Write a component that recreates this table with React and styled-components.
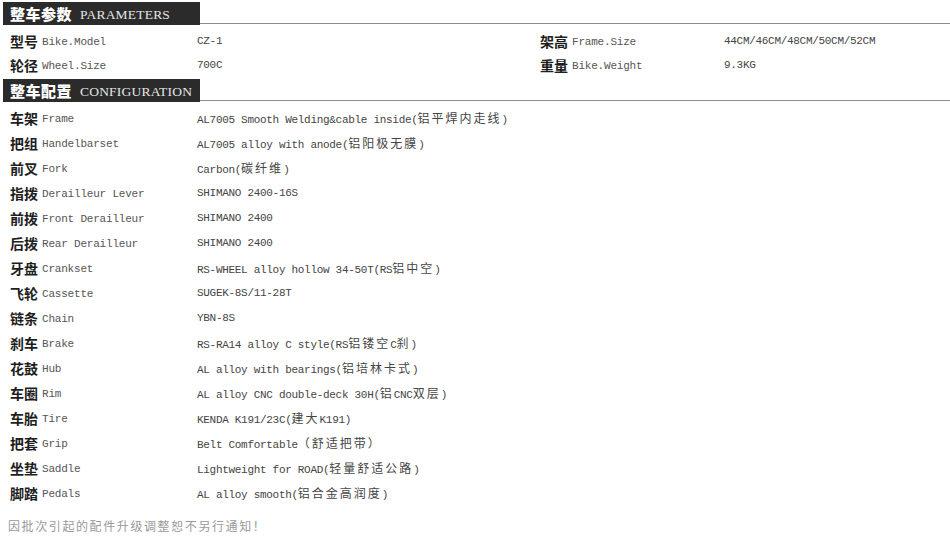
import React from "react";
import styled, { createGlobalStyle } from "styled-components";

const GlobalStyle = createGlobalStyle`
  body {
    margin: 0;
    background: #fff;
    font-family: "Liberation Mono", "Noto Sans CJK SC", monospace;
  }
`;

const Page = styled.div`
  width: 950px;
  padding-top: 2px;
`;

const SectionHead = styled.div`
  display: flex;
  align-items: flex-end;
  padding-left: 3px;
`;

const Tab = styled.div`
  width: 197px;
  height: 23px;
  background: #2b2b2b;
  display: flex;
  align-items: center;
  padding-left: 7px;
  box-sizing: border-box;
  gap: 8px;
`;

const TabCn = styled.span`
  font-family: "Noto Sans CJK SC", sans-serif;
  font-weight: 900;
  font-size: 15px;
  color: #fff;
  letter-spacing: 0.5px;
`;

const TabEn = styled.span`
  font-family: "Liberation Serif", serif;
  font-size: 13.5px;
  color: #e6e6e6;
  letter-spacing: 0.2px;
  margin-top: 2px;
`;

const Rule = styled.div`
  flex: 1;
  height: 1px;
  background: #8c8c8c;
  margin-bottom: 1px;
`;

const ParamGrid = styled.div`
  display: grid;
  grid-template-columns: 187px 343px 184px 1fr;
  grid-auto-rows: 24px;
  align-items: center;
  padding: 4px 0 2px 10px;
`;

const ConfigGrid = styled.div`
  display: grid;
  grid-template-columns: 187px 1fr;
  grid-auto-rows: 25px;
  align-items: center;
  padding: 3px 0 12px 10px;
`;

const Label = styled.div`
  display: flex;
  align-items: center;
  white-space: nowrap;
`;

const LabelCn = styled.span`
  font-family: "Noto Sans CJK SC", sans-serif;
  font-weight: 700;
  font-size: 14px;
  color: #1e1e1e;
`;

const LabelEn = styled.span`
  font-family: "Liberation Mono", monospace;
  font-size: 11px;
  color: #555;
  margin-left: 4px;
  margin-top: 2px;
  letter-spacing: -0.2px;
`;

const Value = styled.div`
  font-family: "Liberation Mono", monospace;
  font-size: 11px;
  color: #444;
  white-space: nowrap;
  letter-spacing: -0.3px;
`;

const Cjk = styled.span`
  font-family: "Noto Sans CJK SC", sans-serif;
  font-size: 12px;
  letter-spacing: 2px;
  color: #444;
`;

const Footer = styled.div`
  padding-left: 8px;
  font-family: "Noto Sans CJK SC", sans-serif;
  font-size: 12px;
  letter-spacing: 1.6px;
  color: #999;
`;

const splitRuns = (text) =>
  text.split(/([\u3000-\u9fff\uff00-\uffef]+)/).map((part, i) =>
    /[\u3000-\u9fff\uff00-\uffef]/.test(part) ? <Cjk key={i}>{part}</Cjk> : part
  );

const params = [
  ["型号", "Bike.Model", "CZ-1", "架高", "Frame.Size", "44CM/46CM/48CM/50CM/52CM"],
  ["轮径", "Wheel.Size", "700C", "重量", "Bike.Weight", "9.3KG"],
];

const config = [
  ["车架", "Frame", "AL7005 Smooth Welding&cable inside(铝平焊内走线)"],
  ["把组", "Handelbarset", "AL7005 alloy with anode(铝阳极无膜)"],
  ["前叉", "Fork", "Carbon(碳纤维)"],
  ["指拨", "Derailleur Lever", "SHIMANO 2400-16S"],
  ["前拨", "Front Derailleur", "SHIMANO 2400"],
  ["后拨", "Rear Derailleur", "SHIMANO 2400"],
  ["牙盘", "Crankset", "RS-WHEEL alloy hollow 34-50T(RS铝中空)"],
  ["飞轮", "Cassette", "SUGEK-8S/11-28T"],
  ["链条", "Chain", "YBN-8S"],
  ["刹车", "Brake", "RS-RA14 alloy C style(RS铝镂空C刹)"],
  ["花鼓", "Hub", "AL alloy with bearings(铝培林卡式)"],
  ["车圈", "Rim", "AL alloy CNC double-deck 30H(铝CNC双层)"],
  ["车胎", "Tire", "KENDA K191/23C(建大K191)"],
  ["把套", "Grip", "Belt Comfortable（舒适把带）"],
  ["坐垫", "Saddle", "Lightweight for ROAD(轻量舒适公路)"],
  ["脚踏", "Pedals", "AL alloy smooth(铝合金高润度)"],
];

const Section = ({ cn, en }) => (
  <SectionHead>
    <Tab>
      <TabCn>{cn}</TabCn>
      <TabEn>{en}</TabEn>
    </Tab>
    <Rule />
  </SectionHead>
);

export default function App() {
  return (
    <Page>
      <GlobalStyle />
      <Section cn="整车参数" en="PARAMETERS" />
      <ParamGrid>
        {params.map(([c1, e1, v1, c2, e2, v2]) => (
          <React.Fragment key={c1}>
            <Label>
              <LabelCn>{c1}</LabelCn>
              <LabelEn>{e1}</LabelEn>
            </Label>
            <Value>{v1}</Value>
            <Label>
              <LabelCn>{c2}</LabelCn>
              <LabelEn>{e2}</LabelEn>
            </Label>
            <Value>{v2}</Value>
          </React.Fragment>
        ))}
      </ParamGrid>
      <Section cn="整车配置" en="CONFIGURATION" />
      <ConfigGrid>
        {config.map(([cn, en, val]) => (
          <React.Fragment key={cn}>
            <Label>
              <LabelCn>{cn}</LabelCn>
              <LabelEn>{en}</LabelEn>
            </Label>
            <Value>{splitRuns(val)}</Value>
          </React.Fragment>
        ))}
      </ConfigGrid>
      <Footer>因批次引起的配件升级调整恕不另行通知！</Footer>
    </Page>
  );
}
